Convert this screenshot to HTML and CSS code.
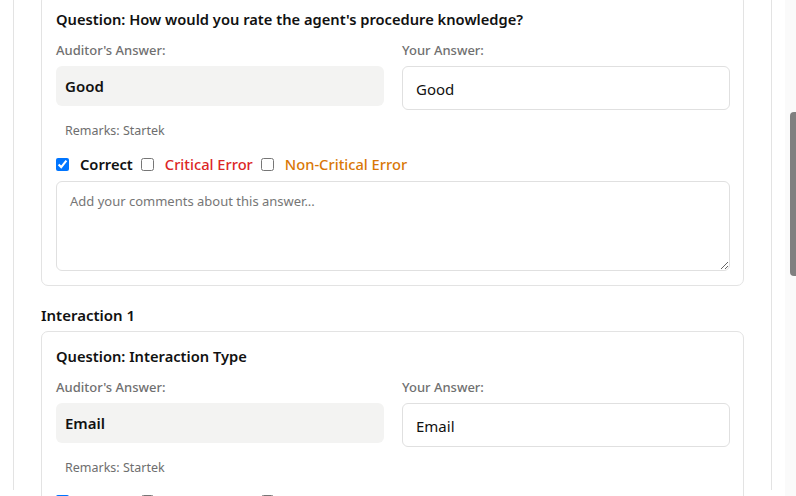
FILE: index.html
```html
<!DOCTYPE html>
<html>
<head>
<meta charset="utf-8">
<link rel="stylesheet" href="styles.css">
</head>
<body>
<div class="screen">
  <div class="viewport">
    <div class="panel">
      <div class="card card-first">
        <div class="question">Question: How would you rate the agent's procedure knowledge?</div>
        <div class="answers">
          <div class="col">
            <div class="label">Auditor's Answer:</div>
            <div class="auditor-box">Good</div>
            <div class="remarks">Remarks: Startek</div>
          </div>
          <div class="col">
            <div class="label">Your Answer:</div>
            <div class="your-box">Good</div>
          </div>
        </div>
        <div class="checks">
          <label class="check"><input type="checkbox" checked><span class="t-correct">Correct</span></label>
          <label class="check"><input type="checkbox"><span class="t-critical">Critical Error</span></label>
          <label class="check"><input type="checkbox"><span class="t-noncritical">Non-Critical Error</span></label>
        </div>
        <textarea class="comments" placeholder="Add your comments about this answer..."></textarea>
      </div>

      <div class="section-title">Interaction 1</div>

      <div class="card">
        <div class="question">Question: Interaction Type</div>
        <div class="answers">
          <div class="col">
            <div class="label">Auditor's Answer:</div>
            <div class="auditor-box">Email</div>
            <div class="remarks">Remarks: Startek</div>
          </div>
          <div class="col">
            <div class="label">Your Answer:</div>
            <div class="your-box">Email</div>
          </div>
        </div>
        <div class="checks">
          <label class="check"><input type="checkbox" checked><span class="t-correct">Correct</span></label>
          <label class="check"><input type="checkbox"><span class="t-critical">Critical Error</span></label>
          <label class="check"><input type="checkbox"><span class="t-noncritical">Non-Critical Error</span></label>
        </div>
        <textarea class="comments" placeholder="Add your comments about this answer..."></textarea>
      </div>
    </div>
  </div>
  <div class="scrollbar"><div class="thumb"></div></div>
</div>
</body>
</html>
```

FILE: styles.css
```css
* { box-sizing: border-box; }
html, body { margin: 0; padding: 0; background: #fff; }
body {
  font-family: "Noto Sans", "Open Sans", sans-serif;
  color: #111;
  width: 796px;
  height: 496px;
  overflow: hidden;
}
.screen {
  display: flex;
  height: 496px;
  overflow: hidden;
}
.viewport {
  flex: 1;
  padding-left: 13px;
  padding-right: 13px;
  overflow: hidden;
}
.panel {
  border-left: 1px solid #e3e3e3;
  border-right: 1px solid #e3e3e3;
  padding: 0 27px;
  height: 100%;
}
.card {
  border: 1px solid #e3e3e3;
  border-radius: 7px;
  padding: 14px 13px 14px 14px;
}
.card-first {
  margin-top: -6px;
}
.question {
  font-size: 14.7px;
  font-weight: 600;
  line-height: 20px;
  color: #111;
}
.answers {
  display: grid;
  grid-template-columns: 1fr 1fr;
  column-gap: 18px;
  margin-top: 12px;
}
.col { display: flex; flex-direction: column; }
.label {
  font-size: 13px;
  line-height: 18px;
  font-weight: 500;
  color: #707070;
  margin-bottom: 7px;
}
.auditor-box {
  height: 40px;
  background: #f3f3f2;
  border-radius: 6px;
  padding: 0 9px;
  display: flex;
  align-items: center;
  font-size: 15px;
  font-weight: 600;
  color: #111;
}
.your-box {
  height: 44px;
  border: 1px solid #e0e0e0;
  border-radius: 6px;
  padding: 0 13px;
  display: flex;
  align-items: center;
  font-size: 15px;
  color: #111;
  padding-top: 2px;
}
.remarks {
  margin-top: 16px;
  padding-left: 9px;
  font-size: 12.5px;
  line-height: 18px;
  color: #6e6e6e;
}
.checks {
  display: flex;
  align-items: center;
  gap: 8px;
  margin-top: 14px;
  height: 20px;
}
.check {
  display: flex;
  align-items: center;
  gap: 11px;
  font-size: 14.7px;
}
.check input {
  margin: 0;
  width: 13px;
  height: 13px;
}
.t-correct { font-weight: 600; color: #111; }
.t-critical { font-weight: 500; color: #dc2626; }
.t-noncritical { font-weight: 500; color: #d97706; }
.comments {
  display: block;
  width: 100%;
  height: 90px;
  margin-top: 7px;
  border: 1px solid #e0e0e0;
  border-radius: 6px;
  padding: 10px 13px;
  font-family: inherit;
  font-size: 13px;
  resize: vertical;
}
.comments::placeholder { color: #767676; }
.section-title {
  margin-top: 19px;
  margin-bottom: 6px;
  font-size: 15px;
  font-weight: 600;
  line-height: 20px;
}
.scrollbar {
  width: 11px;
  background: #fafafa;
  display: flex;
  justify-content: flex-end;
}
.thumb {
  margin-top: 112px;
  width: 6px;
  height: 164px;
  background: #808080;
  border-radius: 4px 0 0 4px;
}
```
